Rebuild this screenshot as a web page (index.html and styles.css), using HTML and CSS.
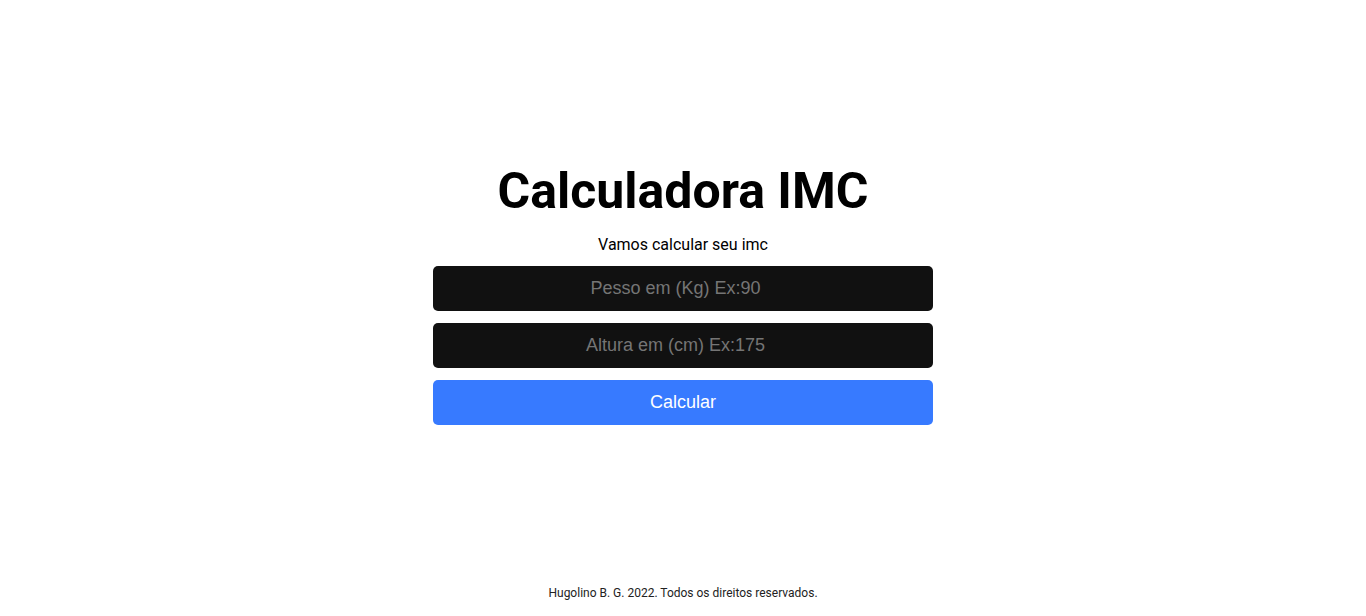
FILE: index.html
```html
<!DOCTYPE html>
<html lang="pt-BR">
<head>
<meta charset="utf-8">
<title>Calculadora IMC</title>
<link rel="stylesheet" href="styles.css">
</head>
<body>
<main class="page">
  <section class="calc">
    <h1 class="title">Calculadora IMC</h1>
    <p class="subtitle">Vamos calcular seu imc</p>
    <form class="form">
      <input class="field" type="text" placeholder="Pesso em (Kg) Ex:90">
      <input class="field" type="text" placeholder="Altura em (cm) Ex:175">
      <button class="btn" type="button">Calcular</button>
    </form>
  </section>
</main>
<footer class="footer">Hugolino B. G. 2022. Todos os direitos reservados.</footer>
</body>
</html>
```
FILE: styles.css
```css
* { box-sizing: border-box; }
html, body { height: 100%; }
body {
  margin: 0;
  font-family: Roboto, "Liberation Sans", sans-serif;
  color: #000;
  background: #fff;
  display: flex;
  flex-direction: column;
}
.page {
  flex: 1;
  display: flex;
  justify-content: center;
  padding-top: 162px;
}
.calc {
  width: 500px;
  display: flex;
  flex-direction: column;
  align-items: center;
}
.title {
  margin: 0;
  font-size: 50px;
  font-weight: 700;
  line-height: 58px;
}
.subtitle {
  margin: 15px 0 11px;
  font-size: 16px;
  line-height: 20px;
}
.form {
  width: 100%;
  display: flex;
  flex-direction: column;
  gap: 12px;
}
.field, .btn {
  width: 100%;
  height: 45px;
  border: none;
  border-radius: 5px;
  font-family: "Liberation Sans", Arial, sans-serif;
  font-size: 18px;
  text-align: center;
  outline: none;
}
.field {
  background: #111;
  color: #fff;
  padding: 0 15px 0 0;
}
.field::placeholder { color: #757575; }
.btn {
  background: #377aff;
  color: #fff;
  cursor: pointer;
}
.footer {
  text-align: center;
  font-size: 12px;
  color: #222;
  padding-bottom: 16px;
}
```
